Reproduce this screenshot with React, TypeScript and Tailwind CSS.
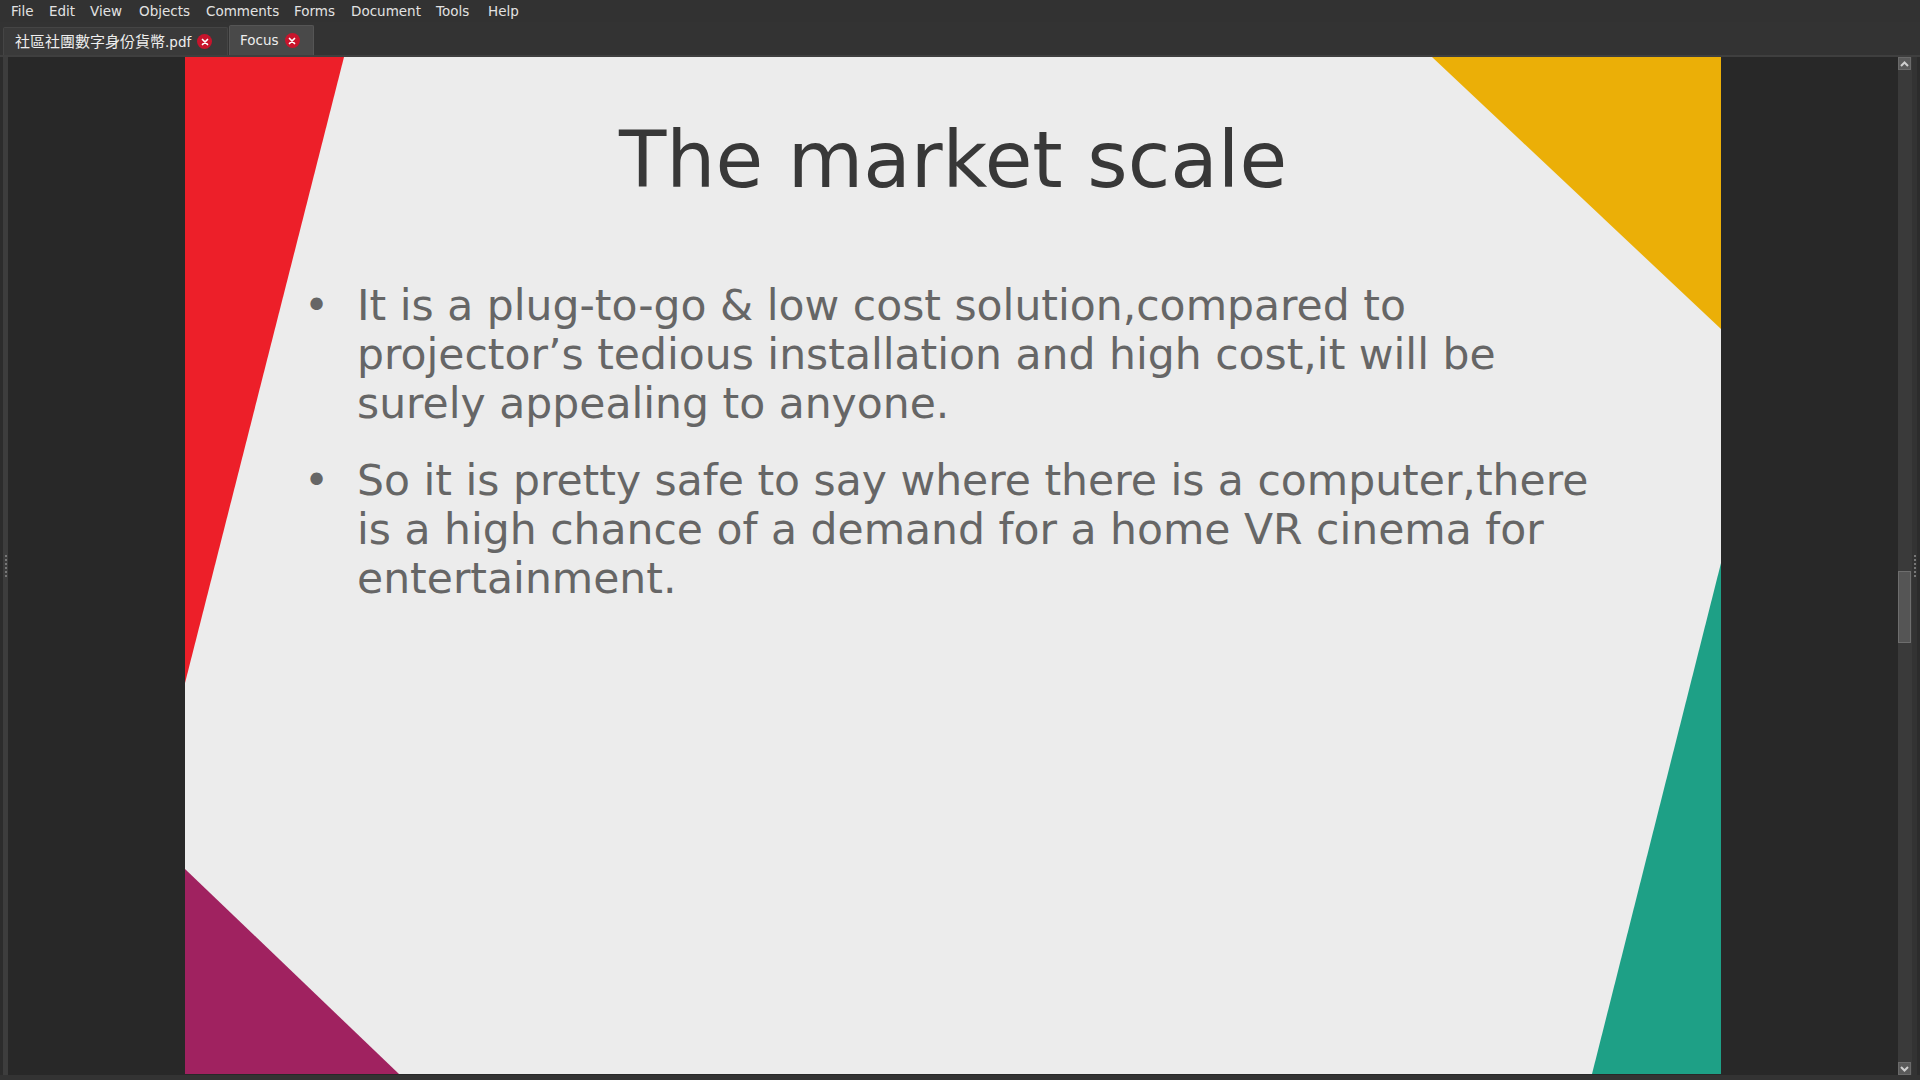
const MENU: [string, number][] = [
  ["File", 38],
  ["Edit", 41],
  ["View", 49],
  ["Objects", 67],
  ["Comments", 88],
  ["Forms", 57],
  ["Document", 85],
  ["Tools", 52],
  ["Help", 40],
];

function CloseDot() {
  return (
    <span className="w-[15px] h-[15px] rounded-full bg-[#c8142c] flex items-center justify-center shrink-0">
      <svg width="8" height="8" viewBox="0 0 8 8">
        <path d="M1.5 1.5 L6.5 6.5 M6.5 1.5 L1.5 6.5" stroke="#fff" strokeWidth="1.7" strokeLinecap="round" />
      </svg>
    </span>
  );
}

function Grip() {
  return (
    <div className="flex flex-col gap-[2px]">
      {[0, 1, 2, 3, 4, 5].map((i) => (
        <span key={i} className="w-[2px] h-[2px] bg-[#777]" />
      ))}
    </div>
  );
}

function Chevron({ down }: { down?: boolean }) {
  return (
    <svg width="9" height="6" viewBox="0 0 9 6">
      <path
        d={down ? "M1 1 L4.5 4.5 L8 1" : "M1 5 L4.5 1.5 L8 5"}
        stroke="#cfcfcf"
        strokeWidth="2"
        fill="none"
      />
    </svg>
  );
}

function Slide() {
  return (
    <div className="relative w-[1536px] h-[1017px] bg-[#ececec] shrink-0 overflow-hidden">
      <svg className="absolute inset-0" width="1536" height="1017" viewBox="0 0 1536 1017">
        <polygon points="0,0 159,0 0,626" fill="#ed1f29" />
        <polygon points="1247,0 1536,0 1536,272" fill="#ebaf07" />
        <polygon points="1536,506 1536,1017 1407,1017" fill="#1ea086" />
        <polygon points="0,812 0,1017 214,1017" fill="#a02260" />
      </svg>
      <div className="relative font-['DejaVu_Sans',sans-serif]">
        <h1 className="pt-[58px] text-center text-[77.5px] leading-[1.164] text-[#383838]">The market scale</h1>
        <div className="mt-[76px] pl-[119px] text-[42.5px] leading-[49px] text-[#666666]">
          <div className="flex">
            <span className="w-[53px] shrink-0">•</span>
            <p>
              It is a plug-to-go &amp; low cost solution,compared to
              <br />
              projector’s tedious installation and high cost,it will be
              <br />
              surely appealing to anyone.
            </p>
          </div>
          <div className="flex mt-[28px]">
            <span className="w-[53px] shrink-0">•</span>
            <p>
              So it is pretty safe to say where there is a computer,there
              <br />
              is a high chance of a demand for a home VR cinema for
              <br />
              entertainment.
            </p>
          </div>
        </div>
      </div>
    </div>
  );
}

export default function App() {
  return (
    <div className="w-[1920px] h-[1080px] flex flex-col bg-[#333333] overflow-hidden font-['DejaVu_Sans',sans-serif]">
      {/* menu bar */}
      <div className="h-[22px] flex items-center pl-[11px] bg-[#323232] text-[13.5px] text-[#e2e2e2]">
        {MENU.map(([m, w]) => (
          <span key={m} style={{ width: w }} className="shrink-0">
            {m}
          </span>
        ))}
      </div>
      {/* tabs */}
      <div className="h-[33px] flex items-end pl-[3px] gap-[1px] bg-[#333333]">
        <div className="h-[28px] w-[225px] flex items-center gap-[6px] pl-[11px] bg-[#3a3a3a] border border-b-0 border-[#454545] rounded-t-[2px] text-[13.5px] text-[#eeeeee]">
          <span className="whitespace-nowrap">
            <span className="text-[15px] font-['Noto_Sans_CJK_TC',sans-serif]">社區社團數字身份貨幣</span>.pdf
          </span>
          <CloseDot />
        </div>
        <div className="h-[30px] w-[85px] flex items-center gap-[6px] pl-[10px] bg-[#494949] border border-b-0 border-[#555] rounded-t-[2px] text-[13.5px] text-[#eeeeee]">
          <span>Focus</span>
          <CloseDot />
        </div>
      </div>
      <div className="h-[2px] bg-[#3f3f3f]" />
      {/* main */}
      <div className="h-[1018px] flex bg-[#282828]">
        <div className="w-[3px] bg-[#2c2c2c]" />
        <div className="w-[5px] bg-[#3d3d3d] flex items-center justify-center">
          <Grip />
        </div>
        <div className="w-[177px]" />
        <Slide />
        <div className="w-[177px]" />
        <div className="w-[14px] bg-[#3a3a3a] flex flex-col">
          <div className="h-[13px] w-[13px] bg-[#5a5a5a] border border-[#6a6a6a] flex items-center justify-center">
            <Chevron />
          </div>
          <div className="h-[501px]" />
          <div className="h-[72px] w-[13px] bg-[#555555] border border-[#6e6e6e]" />
          <div className="flex-1" />
          <div className="h-[13px] w-[13px] bg-[#5a5a5a] border border-[#6a6a6a] flex items-center justify-center">
            <Chevron down />
          </div>
        </div>
        <div className="w-[5px] bg-[#333333] flex items-center justify-center">
          <Grip />
        </div>
        <div className="w-[3px] bg-[#2c2c2c]" />
      </div>
      <div className="flex-1 bg-[#333333]" />
    </div>
  );
}
